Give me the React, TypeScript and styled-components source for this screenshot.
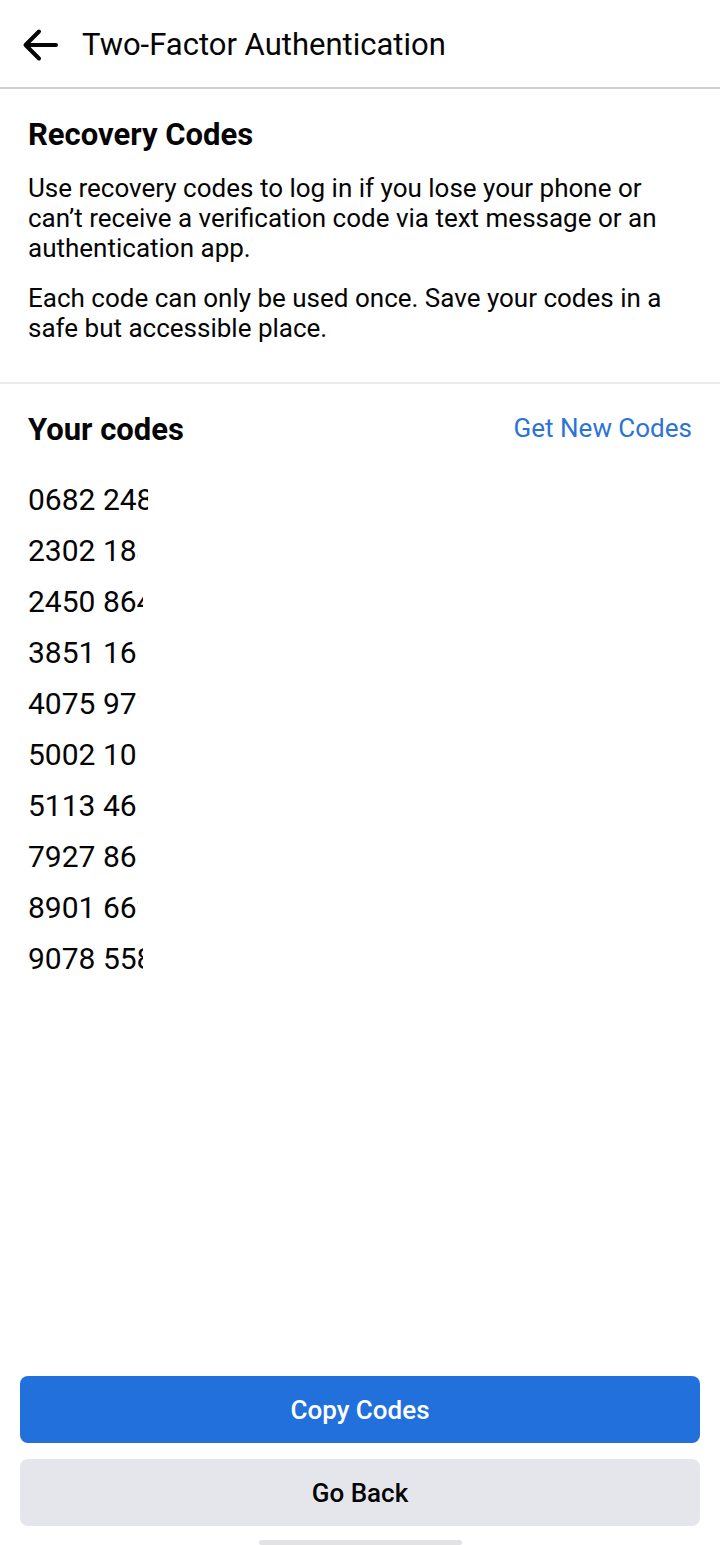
import styled, { createGlobalStyle } from 'styled-components';

const GlobalStyle = createGlobalStyle`
  html, body {
    margin: 0;
    padding: 0;
    background: #ffffff;
  }
  body {
    font-family: Roboto, 'Liberation Sans', sans-serif;
    color: #050505;
  }
`

const Screen = styled.div`
  width: 720px;
  height: 1545px;
  display: flex;
  flex-direction: column;
  background: #ffffff;
`

const Header = styled.header`
  height: 89px;
  display: flex;
  align-items: center;
  padding: 3px 0 0 22px;
  gap: 24px;
  border-bottom: 2px solid #cfd0d2;
  box-sizing: border-box;
`

const BackIcon = styled.svg`
  width: 36px;
  height: 34px;
  display: block;
`

const Title = styled.h1`
  margin: 0;
  font-size: 31px;
  font-weight: 400;
  line-height: 36px;
  color: #050505;
`

const Intro = styled.section`
  padding: 28px 28px 39px;
  border-bottom: 2px solid #e9eaec;
`

const SectionTitle = styled.h2`
  margin: 0 0 20px;
  font-size: 31px;
  font-weight: 700;
  line-height: 36px;
`

const Paragraph = styled.p`
  margin: 0 0 20px;
  font-size: 26px;
  line-height: 30px;
  color: #050505;

  &:last-child {
    margin-bottom: 0;
  }
`

const Codes = styled.section`
  padding: 28px 28px 0;
  flex: 1;
`

const CodesHead = styled.div`
  display: flex;
  align-items: flex-start;
  justify-content: space-between;
  margin-bottom: 26px;
`

const CodesTitle = styled.h2`
  margin: 0;
  font-size: 31px;
  font-weight: 700;
  line-height: 36px;
`

const LinkButton = styled.button`
  border: none;
  background: none;
  padding: 0;
  font-family: inherit;
  font-size: 26px;
  line-height: 32px;
  color: #2b74d6;
`

const CodeList = styled.ul`
  list-style: none;
  margin: 0;
  padding: 0;
`

const CodeItem = styled.li<{ $clip: number }>`
  width: ${(p) => p.$clip}px;
  overflow: hidden;
  white-space: nowrap;
  font-size: 30px;
  line-height: 51px;
  color: #050505;
`

const Actions = styled.div`
  padding: 0 20px;
  display: flex;
  flex-direction: column;
  gap: 16px;
`

const Button = styled.button<{ $primary?: boolean }>`
  height: 67px;
  border: none;
  border-radius: 8px;
  font-family: inherit;
  font-size: 26px;
  font-weight: 500;
  background: ${(p) => (p.$primary ? '#2270dc' : '#e4e6eb')};
  color: ${(p) => (p.$primary ? '#ffffff' : '#050505')};
`

const HomeBar = styled.div`
  align-self: center;
  width: 203px;
  height: 5px;
  border-radius: 3px;
  background: #e2e2e4;
  margin-top: 14px;
`

// the codes are only partly visible on screen, each clipped at its own width
const codes: [string, number][] = [
  ['0682 2481', 120],
  ['2302 1837', 110],
  ['2450 8641', 115],
  ['3851 1659', 110],
  ['4075 9715', 111],
  ['5002 1093', 109],
  ['5113 4650', 110],
  ['7927 8612', 109],
  ['8901 6623', 110],
  ['9078 5584', 115],
]

const App = () => (
  <>
    <GlobalStyle />
    <Screen>
      <Header>
        <BackIcon viewBox="0 0 36 34" fill="none">
          <path
            d="M34 17H4M17 3.5L3.5 17L17 30.5"
            stroke="#050505"
            strokeWidth="4"
            strokeLinecap="round"
            strokeLinejoin="round"
          />
        </BackIcon>
        <Title>Two-Factor Authentication</Title>
      </Header>
      <Intro>
        <SectionTitle>Recovery Codes</SectionTitle>
        <Paragraph>
          Use recovery codes to log in if you lose your phone or can’t receive a verification code via text message or an authentication app.
        </Paragraph>
        <Paragraph>
          Each code can only be used once. Save your codes in a safe but accessible place.
        </Paragraph>
      </Intro>
      <Codes>
        <CodesHead>
          <CodesTitle>Your codes</CodesTitle>
          <LinkButton>Get New Codes</LinkButton>
        </CodesHead>
        <CodeList>
          {codes.map(([code, clip]) => (
            <CodeItem key={code} $clip={clip}>{code}</CodeItem>
          ))}
        </CodeList>
      </Codes>
      <Actions>
        <Button $primary>Copy Codes</Button>
        <Button>Go Back</Button>
      </Actions>
      <HomeBar />
    </Screen>
  </>
)

export default App
